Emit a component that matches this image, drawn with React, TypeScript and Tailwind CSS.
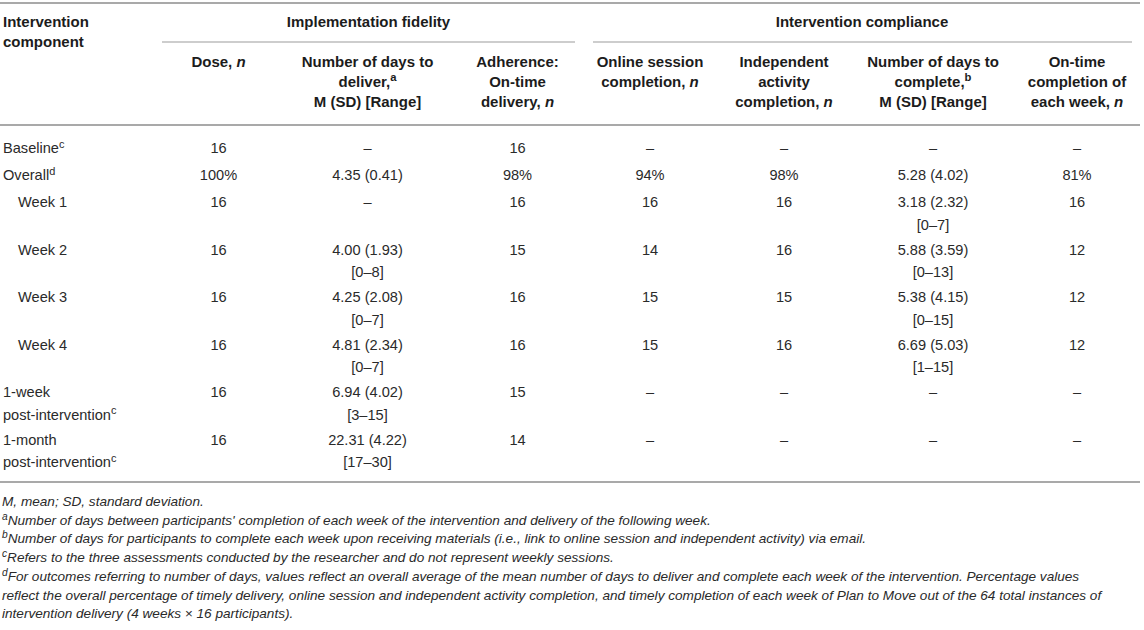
import React from "react";

const GRID = "grid grid-cols-[153px_131px_167px_133px_132px_136px_162px_126px]";

type Row = {
  label: React.ReactNode;
  indent?: boolean;
  cells: (string | [string, string])[];
  tall?: boolean;
};

const rows: Row[] = [
  { label: <>Baseline<sup>c</sup></>, cells: ["16", "–", "16", "–", "–", "–", "–"] },
  { label: <>Overall<sup>d</sup></>, cells: ["100%", "4.35 (0.41)", "98%", "94%", "98%", "5.28 (4.02)", "81%"] },
  { label: "Week 1", indent: true, tall: true, cells: ["16", "–", "16", "16", "16", ["3.18 (2.32)", "[0–7]"], "16"] },
  { label: "Week 2", indent: true, tall: true, cells: ["16", ["4.00 (1.93)", "[0–8]"], "15", "14", "16", ["5.88 (3.59)", "[0–13]"], "12"] },
  { label: "Week 3", indent: true, tall: true, cells: ["16", ["4.25 (2.08)", "[0–7]"], "16", "15", "15", ["5.38 (4.15)", "[0–15]"], "12"] },
  { label: "Week 4", indent: true, tall: true, cells: ["16", ["4.81 (2.34)", "[0–7]"], "16", "15", "16", ["6.69 (5.03)", "[1–15]"], "12"] },
  { label: <>1-week<br />post-intervention<sup>c</sup></>, tall: true, cells: ["16", ["6.94 (4.02)", "[3–15]"], "15", "–", "–", "–", "–"] },
  { label: <>1-month<br />post-intervention<sup>c</sup></>, tall: true, cells: ["16", ["22.31 (4.22)", "[17–30]"], "14", "–", "–", "–", "–"] },
];

function Cell({ v }: { v: string | [string, string] }) {
  if (Array.isArray(v)) {
    return (
      <div className="text-center">
        {v[0]}
        <br />
        {v[1]}
      </div>
    );
  }
  return <div className="text-center">{v}</div>;
}

export default function App() {
  return (
    <div
      className="w-[1144px] h-[630px] bg-white overflow-hidden text-[14.6px] text-[#2a2a2a]"
      style={{ fontFamily: '"Liberation Sans", Arial, Helvetica, sans-serif' }}
    >
      <div className="w-[1140px] pt-[2px]">
        {/* Header */}
        <div className={`${GRID} border-t-2 border-b-2 border-[#a9a9a9] font-bold text-[15px] text-[#1c1c1c] leading-[20px]`}>
          <div className="row-span-2 pl-[3px] pt-[8px]">
            Intervention
            <br />
            component
          </div>
          <div className="col-span-3 pt-[8px]">
            <div className="text-center">Implementation fidelity</div>
            <div className="mx-[9px] mt-[9px] h-[2px] bg-[#cdcdcd]" />
          </div>
          <div className="col-span-4 pt-[8px]">
            <div className="text-center">Intervention compliance</div>
            <div className="ml-[9px] mr-[8px] mt-[9px] h-[2px] bg-[#cdcdcd]" />
          </div>

          <div className="text-center pt-[9px] pb-[12px]">
            Dose, <i className="italic">n</i>
          </div>
          <div className="text-center pt-[9px] pb-[12px]">
            Number of days to
            <br />
            deliver,<sup>a</sup>
            <br />
            M (SD) [Range]
          </div>
          <div className="text-center pt-[9px] pb-[12px]">
            Adherence:
            <br />
            On-time
            <br />
            delivery, <i className="italic">n</i>
          </div>
          <div className="text-center pt-[9px] pb-[12px]">
            Online session
            <br />
            completion, <i className="italic">n</i>
          </div>
          <div className="text-center pt-[9px] pb-[12px]">
            Independent
            <br />
            activity
            <br />
            completion, <i className="italic">n</i>
          </div>
          <div className="text-center pt-[9px] pb-[12px]">
            Number of days to
            <br />
            complete,<sup>b</sup>
            <br />
            M (SD) [Range]
          </div>
          <div className="text-center pt-[9px] pb-[12px]">
            On-time
            <br />
            completion of
            <br />
            each week, <i className="italic">n</i>
          </div>
        </div>

        {/* Body */}
        <div className="border-b-2 border-[#a9a9a9] pt-[8px] pb-[8px] leading-[22.5px]">
          {rows.map((r, i) => (
            <div
              key={i}
              className={`${GRID} pt-[3px] ${r.tall ? "h-[47.5px]" : "h-[27px]"}`}
            >
              <div className={r.indent ? "pl-[18px]" : "pl-[3px]"}>{r.label}</div>
              {r.cells.map((c, j) => (
                <Cell key={j} v={c} />
              ))}
            </div>
          ))}
        </div>

        {/* Footnotes */}
        <div className="pt-[10px] pl-[2px] italic leading-[18.7px] text-[13.6px] text-[#2a2a2a] whitespace-nowrap">
          <div>M, mean; SD, standard deviation.</div>
          <div>
            <sup>a</sup>Number of days between participants' completion of each week of the intervention and delivery of the following week.
          </div>
          <div>
            <sup>b</sup>Number of days for participants to complete each week upon receiving materials (i.e., link to online session and independent activity) via email.
          </div>
          <div>
            <sup>c</sup>Refers to the three assessments conducted by the researcher and do not represent weekly sessions.
          </div>
          <div>
            <sup>d</sup>For outcomes referring to number of days, values reflect an overall average of the mean number of days to deliver and complete each week of the intervention. Percentage values
          </div>
          <div>
            reflect the overall percentage of timely delivery, online session and independent activity completion, and timely completion of each week of Plan to Move out of the 64 total instances of
          </div>
          <div>intervention delivery (4 weeks × 16 participants).</div>
        </div>
      </div>
    </div>
  );
}
